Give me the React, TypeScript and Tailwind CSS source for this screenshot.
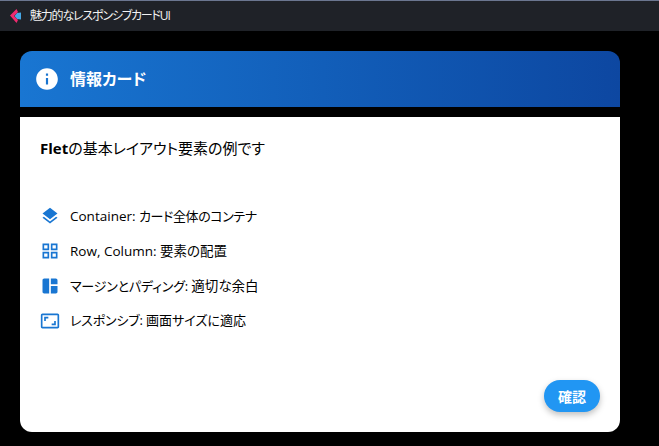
const font = "font-['Open_Sans','Noto_Sans_CJK_JP',sans-serif] [font-feature-settings:'palt']";

const items = [
  {
    head: "Container:",
    headClass: "text-[13.5px]",
    tail: "カード全体のコンテナ",
    tailClass: "tracking-[-0.4px]",
    path: "M11.99 18.54l-7.37-5.73L3 14.07l9 7 9-7-1.63-1.27-7.38 5.74zM12 16l7.36-5.73L21 9l-9-7-9 7 1.63 1.27L12 16z",
  },
  {
    head: "Row, Column:",
    headClass: "text-[13.5px]",
    tail: "要素の配置",
    tailClass: "text-[13.5px]",
    path: "M3 3v8h8V3H3zm6 6H5V5h4v4zm-6 4v8h8v-8H3zm6 6H5v-4h4v4zm4-16v8h8V3h-8zm6 6h-4V5h4v4zm-6 4v8h8v-8h-8zm6 6h-4v-4h4v4z",
  },
  {
    head: "マージンとパディング:",
    headClass: "tracking-[-0.2px]",
    tail: "適切な余白",
    tailClass: "text-[13.5px]",
    path: "M11 21H5c-1.1 0-2-.9-2-2V5c0-1.1.9-2 2-2h6v18zm2 0h6c1.1 0 2-.9 2-2v-7h-8v9zm8-11V5c0-1.1-.9-2-2-2h-6v7h8z",
  },
  {
    head: "レスポンシブ:",
    headClass: "tracking-[-0.2px]",
    tail: "画面サイズに適応",
    tailClass: "",
    path: "M19 12h-2v3h-3v2h5v-5zM7 9h3V7H5v5h2V9zm14-6H3c-1.1 0-2 .9-2 2v14c0 1.1.9 2 2 2h18c1.1 0 2-.9 2-2V5c0-1.1-.9-2-2-2zm0 16.01H3V4.99h18v14.02z",
  },
];

export default function App() {
  return (
    <div className={`w-[659px] h-[446px] bg-black overflow-hidden flex flex-col ${font}`}>
      {/* Title bar */}
      <div className="h-[31px] bg-[#1f2228] border-t border-[#6b7690] flex items-center pl-[10px] gap-[9px] shrink-0">
        <svg viewBox="0 0 11 14" className="w-[11px] h-[14px]">
          <path d="M7 4 L11 3.5 L11 10.5 L7 10 L4.5 7 Z" fill="#45a7e6" />
          <path d="M6.5 0 L0 6.5 L6.5 14 L8 11 L4 7 L8 3 Z" fill="#ee2a6f" />
        </svg>
        <span className="text-[12px] leading-none tracking-[-1.2px] text-[#f2f2f2]">魅力的なレスポンシブカードUI</span>
      </div>

      <div className="pl-[20px] pr-[39px] pt-[20px] flex flex-col">
        {/* Card header */}
        <div className="h-[56px] rounded-t-[12px] bg-linear-to-r from-[#1976d2] to-[#0d47a1] flex items-center pl-[14px] gap-[10px]">
          <svg viewBox="0 0 24 24" className="w-[26px] h-[26px] fill-white">
            <path d="M12 2C6.48 2 2 6.48 2 12s4.48 10 10 10 10-4.48 10-10S17.52 2 12 2zm1 15h-2v-6h2v6zm0-8h-2V7h2v2z" />
          </svg>
          <span className="text-[16px] font-bold text-white">情報カード</span>
        </div>

        {/* Card body */}
        <div className="mt-[10px] h-[315px] bg-white rounded-b-[12px] flex flex-col px-[20px]">
          <p className="mt-[21px] text-[15px] leading-[20px] text-black">
            <span className="font-bold">Flet</span>の基本レイアウト要素の例です
          </p>
          <ul className="mt-[46px] flex flex-col gap-[11px]">
            {items.map((item) => (
              <li key={item.head} className="flex items-center h-[24px] gap-[10px] text-[13px] text-black">
                <svg viewBox="0 0 24 24" className="w-[20px] h-[20px] fill-[#1976d2] shrink-0">
                  <path d={item.path} />
                </svg>
                <span className="whitespace-nowrap">
                  <span className={item.headClass}>{item.head}</span>{" "}
                  <span className={item.tailClass}>{item.tail}</span>
                </span>
              </li>
            ))}
          </ul>
          <div className="mt-auto mb-[20px] flex justify-end">
            <button className="w-[56px] h-[32px] rounded-full bg-[#2196f3] text-white text-[14px] font-bold shadow-[0_3px_6px_rgba(0,0,0,0.25)]">
              確認
            </button>
          </div>
        </div>
      </div>
    </div>
  );
}
